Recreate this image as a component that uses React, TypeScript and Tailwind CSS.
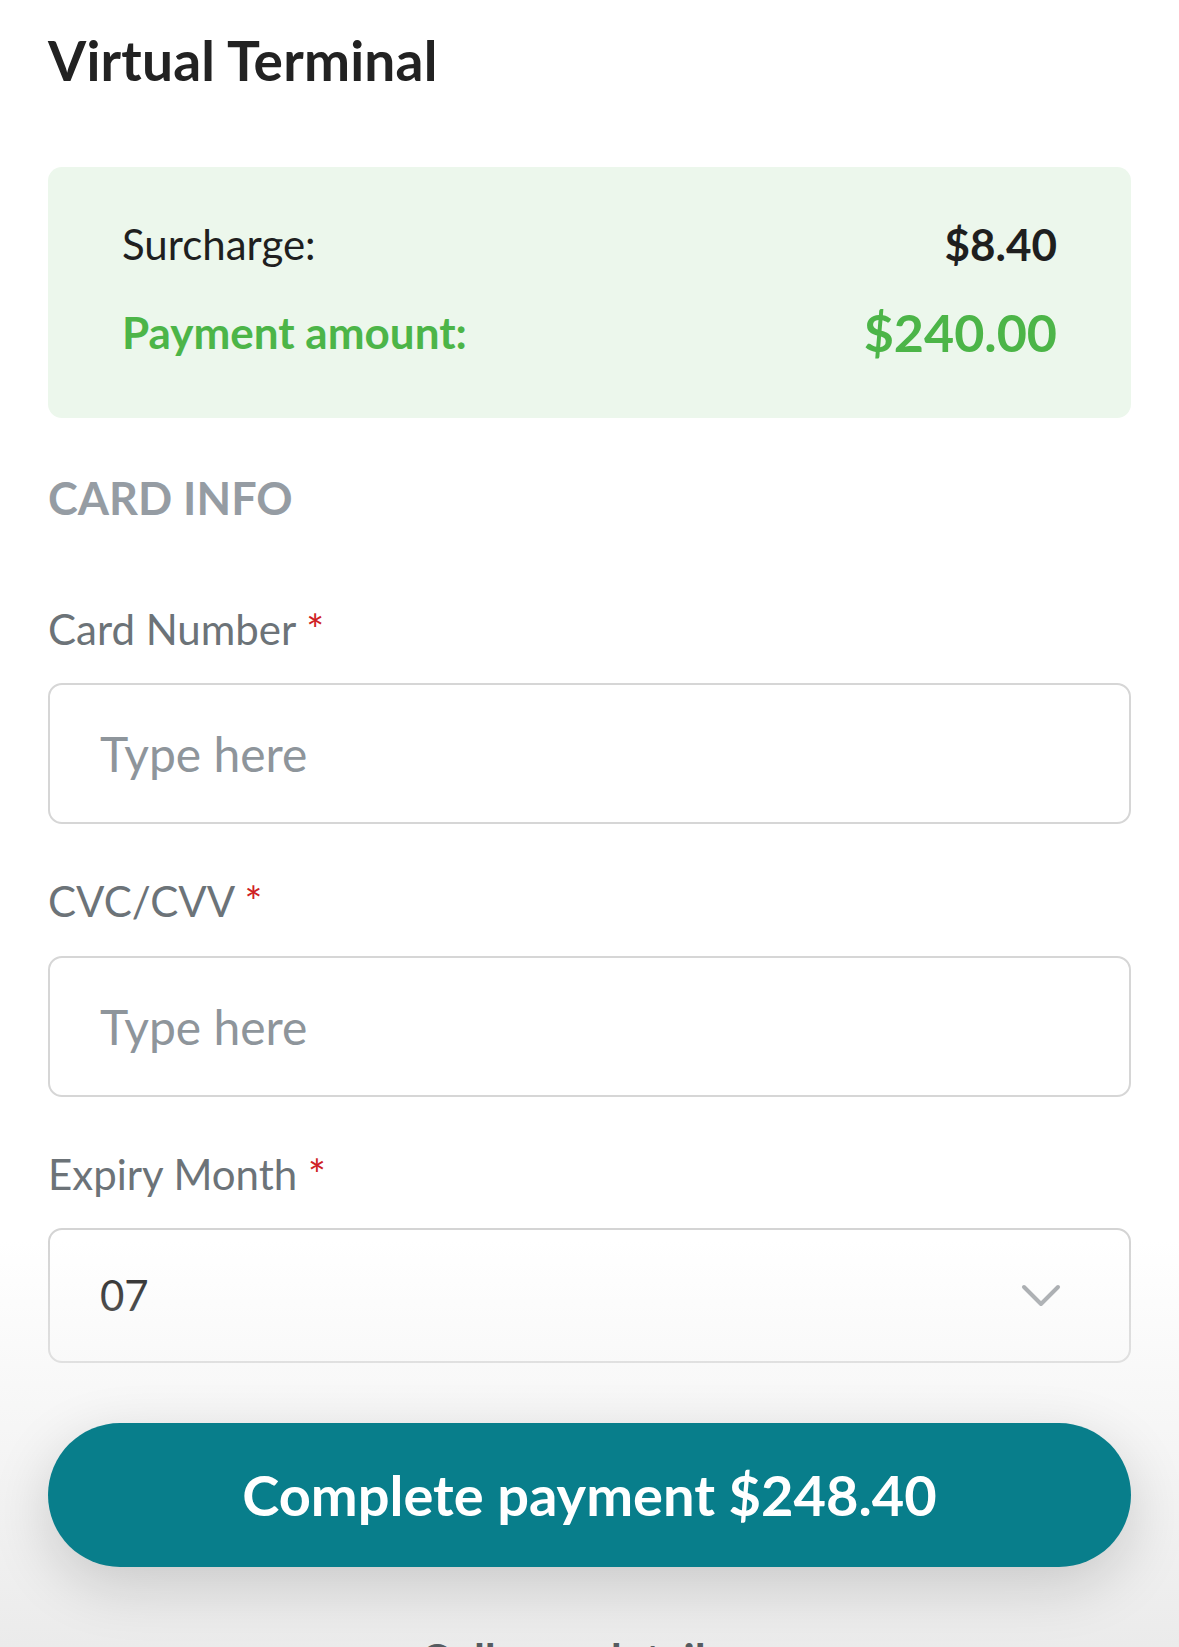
import { useState } from "react";

const font = { fontFamily: "Lato, 'Noto Sans', sans-serif" };

const Label = ({ text }: { text: string }) => (
  <label className="block text-[42px] leading-none text-[#6c7378]">
    {text} <span className="text-[#cf1f25]">*</span>
  </label>
);

const App = () => {
  const [cardNumber, setCardNumber] = useState("");
  const [cvc, setCvc] = useState("");

  return (
    <div
      className="relative w-full min-h-[1647px] h-[1647px] overflow-hidden bg-white antialiased"
      style={font}
    >
      <div className="px-12">
        {/* Header */}
        <h1 className="pt-[33px] text-[55px] leading-none font-bold text-[#222222] tracking-[0.2px]">
          Virtual Terminal
        </h1>

        {/* Summary */}
        <div className="mt-[79px] h-[251px] rounded-[14px] bg-[#ecf7ec] px-[74px] pt-[55px]">
          <div className="flex items-center justify-between h-[44px]">
            <span className="text-[42px] text-[#1f1f1f]">Surcharge:</span>
            <span className="text-[44px] font-bold text-[#1f1f1f]">$8.40</span>
          </div>
          <div className="mt-[44px] flex items-center justify-between h-[44px]">
            <span className="text-[44px] font-bold text-[#4cb548]">
              Payment amount:
            </span>
            <span className="text-[52px] font-bold text-[#4cb548]">$240.00</span>
          </div>
        </div>

        {/* Card info */}
        <h2 className="mt-[58px] text-[45px] leading-none font-bold text-[#959ca3]">
          CARD INFO
        </h2>

        <div className="mt-[87px]">
          <Label text="Card Number" />
          <input
            value={cardNumber}
            onChange={(e) => setCardNumber(e.target.value)}
            placeholder="Type here"
            className="mt-[33px] block w-full h-[141px] rounded-[14px] border-2 border-[#d6d6d6] px-[50px] text-[48px] text-[#222] placeholder:text-[#8e959b] outline-none"
          />
        </div>

        <div className="mt-[56px]">
          <Label text="CVC/CVV" />
          <input
            value={cvc}
            onChange={(e) => setCvc(e.target.value)}
            placeholder="Type here"
            className="mt-[34px] block w-full h-[141px] rounded-[14px] border-2 border-[#d6d6d6] px-[50px] text-[48px] text-[#222] placeholder:text-[#8e959b] outline-none"
          />
        </div>

        <div className="mt-[56px]">
          <Label text="Expiry Month" />
          <div className="mt-[33px] flex w-full h-[135px] items-center justify-between rounded-[14px] border-2 border-[#d4d4d4] pl-[50px] pr-[68px]">
            <span className="text-[42px] text-[#1c1c1c]">07</span>
            <svg width="40" height="24" viewBox="0 0 40 24" fill="none">
              <polyline
                points="3,3 20,20 37,3"
                stroke="#9ea2a6"
                strokeWidth="4"
                strokeLinecap="round"
                strokeLinejoin="round"
              />
            </svg>
          </div>
        </div>
      </div>

      {/* Footer fade over content */}
      <div className="pointer-events-none absolute left-0 right-0 top-[1240px] bottom-0 bg-gradient-to-b from-white/0 via-[#f1f1f1]/70 to-[#ebebeb]" />

      <div className="relative z-10 mt-[60px] px-12">
        <button className="w-full h-[144px] rounded-full bg-[#087e8b] text-[56px] font-bold text-white shadow-[0_18px_60px_rgba(0,0,0,0.16)]">
          Complete payment $248.40
        </button>
        <p className="mt-[70px] pl-[372px] text-[44px] font-bold leading-none text-[#555b60]">
          Collapse details
        </p>
      </div>
    </div>
  );
};

export default App;
